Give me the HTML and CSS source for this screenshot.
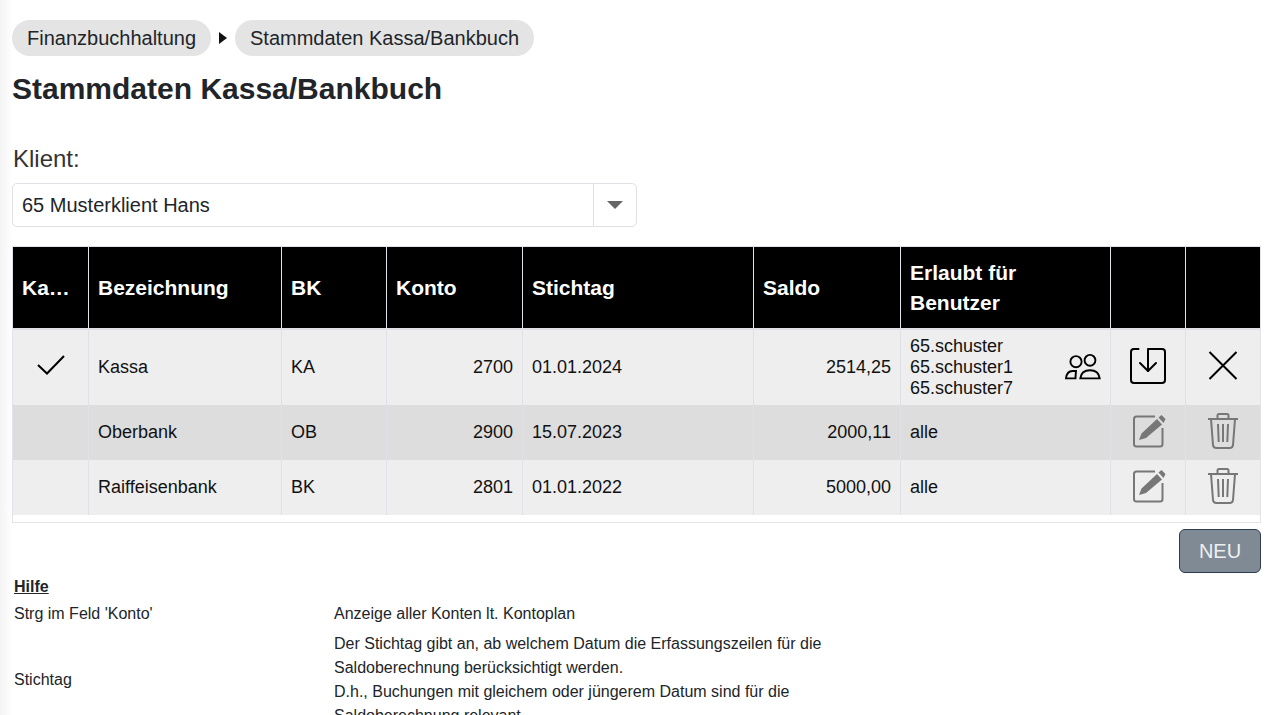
FILE: index.html
```html
<!DOCTYPE html>
<html lang="de">
<head>
<meta charset="utf-8">
<title>Stammdaten Kassa/Bankbuch</title>
<link rel="stylesheet" href="styles.css">
</head>
<body>
<main class="page">
  <nav class="crumbs">
    <span class="crumb">Finanzbuchhaltung</span>
    <span class="crumb-arrow"></span>
    <span class="crumb">Stammdaten Kassa/Bankbuch</span>
  </nav>
  <h1 class="title">Stammdaten Kassa/Bankbuch</h1>
  <label class="client-label">Klient:</label>
  <div class="select">
    <span class="select-value">65 Musterklient Hans</span>
    <span class="select-btn"><span class="caret"></span></span>
  </div>
  <div class="table-wrap">
    <table class="grid">
      <colgroup>
        <col class="c1"><col class="c2"><col class="c3"><col class="c4"><col class="c5"><col class="c6"><col class="c7"><col class="c8"><col class="c9">
      </colgroup>
      <thead>
        <tr>
          <th>Ka…</th><th>Bezeichnung</th><th>BK</th><th>Konto</th><th>Stichtag</th><th>Saldo</th><th>Erlaubt für<br>Benutzer</th><th></th><th></th>
        </tr>
      </thead>
      <tbody>
        <tr class="row-a active">
          <td class="ic">
            <svg class="icon" width="32" height="32" viewBox="0 0 32 32" fill="none" stroke="#000" stroke-width="2"><path d="M3 15 L12 23.500 L29 6"/></svg>
          </td>
          <td>Kassa</td><td>KA</td><td class="num">2700</td><td>01.01.2024</td><td class="num">2514,25</td>
          <td>
            <div class="users">
              <div>65.schuster<br>65.schuster1<br>65.schuster7</div>
              <svg class="user-icon" width="38" height="30" viewBox="0 0 38 30" fill="none" stroke="#000" stroke-width="1.900"><circle cx="13" cy="8.700" r="5.600"/><circle cx="27" cy="7.300" r="5.400"/><path d="M13 18 H9.500 C5.500 18 3.500 21 3 25.400 H12.500 C12.500 23 12.800 20.500 13 18 Z"/><path d="M17.300 25.400 C18 20 22 17.300 27 17.300 C32 17.300 36 20 36.700 25.400 Z"/></svg>
            </div>
          </td>
          <td class="ic">
            <svg class="icon" width="38" height="38" viewBox="0 0 38 38" fill="none" stroke="#000" stroke-width="2" stroke-linecap="round" stroke-linejoin="round"><path d="M9.500 2 H5 Q2 2 2 5 V33 Q2 36 5 36 H33 Q36 36 36 33 V5 Q36 2 33 2 H19 V24"/><path d="M11 16 L19 24 L27 16"/></svg>
          </td>
          <td class="ic">
            <svg class="icon" width="30" height="30" viewBox="0 0 30 30" fill="none" stroke="#000" stroke-width="2"><path d="M1.500 1 L28.500 28 M28.500 1 L1.500 28"/></svg>
          </td>
        </tr>
        <tr class="row-b">
          <td></td><td>Oberbank</td><td>OB</td><td class="num">2900</td><td>15.07.2023</td><td class="num">2000,11</td><td>alle</td>
          <td class="ic">
            <svg class="icon" width="35" height="34" viewBox="0 0 35 34" fill="none"><path d="M24 2.500 H5.500 Q3 2.500 3 5 V30 Q3 32.500 5.500 32.500 H29 Q31.500 32.500 31.500 30 V14" stroke="#777" stroke-width="2"/><path d="M8 26 L10.500 19.500 L26 5 L31 10.500 L15 24 Z M27.500 3.500 L30.500 1 L34.500 5 L32.500 9 Z" fill="#777"/></svg>
          </td>
          <td class="ic">
            <svg class="icon" width="32" height="36" viewBox="0 0 32 36" fill="none" stroke="#777" stroke-width="2"><path d="M1 6 H31"/><path d="M10.500 5.500 V2.500 Q10.500 1 12 1 H20 Q21.500 1 21.500 2.500 V5.500"/><path d="M4 6 L6 32 Q6.300 35 9.500 35 H22.500 Q25.700 35 26 32 L28 6"/><path d="M11 11 L11.700 29 M16 11 V29 M21 11 L20.300 29"/></svg>
          </td>
        </tr>
        <tr class="row-a">
          <td></td><td>Raiffeisenbank</td><td>BK</td><td class="num">2801</td><td>01.01.2022</td><td class="num">5000,00</td><td>alle</td>
          <td class="ic">
            <svg class="icon" width="35" height="34" viewBox="0 0 35 34" fill="none"><path d="M24 2.500 H5.500 Q3 2.500 3 5 V30 Q3 32.500 5.500 32.500 H29 Q31.500 32.500 31.500 30 V14" stroke="#777" stroke-width="2"/><path d="M8 26 L10.500 19.500 L26 5 L31 10.500 L15 24 Z M27.500 3.500 L30.500 1 L34.500 5 L32.500 9 Z" fill="#777"/></svg>
          </td>
          <td class="ic">
            <svg class="icon" width="32" height="36" viewBox="0 0 32 36" fill="none" stroke="#777" stroke-width="2"><path d="M1 6 H31"/><path d="M10.500 5.500 V2.500 Q10.500 1 12 1 H20 Q21.500 1 21.500 2.500 V5.500"/><path d="M4 6 L6 32 Q6.300 35 9.500 35 H22.500 Q25.700 35 26 32 L28 6"/><path d="M11 11 L11.700 29 M16 11 V29 M21 11 L20.300 29"/></svg>
          </td>
        </tr>
      </tbody>
    </table>
  </div>
  <div class="actions"><button class="btn-new">NEU</button></div>
  <section class="help">
    <div class="help-title">Hilfe</div>
    <div class="help-row">
      <div class="help-key">Strg im Feld 'Konto'</div>
      <div class="help-val">Anzeige aller Konten lt. Kontoplan</div>
    </div>
    <div class="help-row help-long">
      <div class="help-key">Stichtag</div>
      <div class="help-val">Der Stichtag gibt an, ab welchem Datum die Erfassungszeilen für die Saldoberechnung berücksichtigt werden.<br>D.h., Buchungen mit gleichem oder jüngerem Datum sind für die Saldoberechnung relevant.</div>
    </div>
  </section>
</main>
</body>
</html>
```
FILE: styles.css
```css
* { box-sizing: border-box; }
html, body { margin: 0; height: 715px; overflow: hidden; background: #fff; }
body {
  font-family: "Liberation Sans", Arial, sans-serif;
  color: #212529;
}
.page {
  height: 715px;
  padding: 20px 15px 0 12px;
  background: linear-gradient(to right, #f4f4f4 0, #f9f9f9 6px, #fff 13px);
}
.crumbs { display: flex; align-items: center; height: 36px; }
.crumb {
  display: flex; align-items: center;
  height: 36px;
  padding: 0 15px;
  border-radius: 18px;
  background: #e4e4e4;
  font-size: 20px;
}
.crumb-arrow {
  width: 0; height: 0;
  margin: 0 8px 0 8px;
  border-left: 8px solid #111;
  border-top: 6.500px solid transparent;
  border-bottom: 6.500px solid transparent;
}
.title { margin: 15px 0 0; font-size: 30px; line-height: 36px; font-weight: 700; }
.client-label { display: block; margin-top: 38px; font-size: 24px; line-height: 28px; color: #333; padding-left: 1px; }
.select {
  display: flex;
  width: 625px; height: 44px;
  margin-top: 10px;
  border: 1px solid #dee2e6;
  border-radius: 5px;
  font-size: 20px;
}
.select-value { flex: 1; display: flex; align-items: center; padding-left: 9px; }
.select-btn { width: 43px; display: flex; align-items: center; justify-content: center; border-left: 1px solid #dee2e6; }
.caret { width: 0; height: 0; border-top: 8px solid #666; border-left: 8px solid transparent; border-right: 8px solid transparent; }
.table-wrap {
  width: 1249px; height: 277px;
  margin-top: 19px;
  border: 1px solid #e2e3e8;
}
.grid { width: 1247px; border-collapse: separate; border-spacing: 0; table-layout: fixed; font-size: 18px; color: #111; }
.c1 { width: 76px; } .c2 { width: 193px; } .c3 { width: 105px; } .c4 { width: 136px; } .c5 { width: 231px; }
.c6 { width: 147px; } .c7 { width: 210px; } .c8 { width: 75px; } .c9 { width: 74px; }
.grid th {
  height: 83px;
  padding: 0 9px;
  background: #000;
  color: #fff;
  text-align: left;
  font-size: 21px;
  line-height: 30px;
  border-right: 1px solid #e2e3e8;
  border-bottom: 2px solid #dfe0e4;
}
.grid th:last-child, .grid td:last-child { border-right: 0; }
.grid td { padding: 0 9px; border-right: 1px solid #dfe1e6; line-height: 21px; }
.row-a td { height: 55px; background: #eee; }
.row-b td { height: 55px; background: #ddd; }
.row-a.active td { height: 75px; }
.num { text-align: right; }
.grid td.ic { padding: 0 0 3px; }
.icon { display: block; margin: 0 auto; }
.user-icon { display: block; flex: none; }
.users { display: flex; align-items: center; justify-content: space-between; }
.actions { display: flex; justify-content: flex-end; width: 1249px; margin-top: 6px; }
.btn-new {
  width: 82px; height: 44px;
  border: 1px solid #2c3e50;
  border-radius: 6px;
  background: #808a94;
  color: #eef0f2;
  font: 20px "Liberation Sans", Arial, sans-serif;
}
.help { margin-top: 5px; padding-left: 2px; font-size: 16px; color: #212529; }
.help-title { font-weight: 700; text-decoration: underline; line-height: 18px; }
.help-row { display: flex; align-items: center; }
.help-key { width: 320px; flex: none; }
.help-val { width: 500px; line-height: 24px; }
.help-row:nth-child(2) { margin-top: 6px; }
.help-long { margin-top: 6px; }
```
